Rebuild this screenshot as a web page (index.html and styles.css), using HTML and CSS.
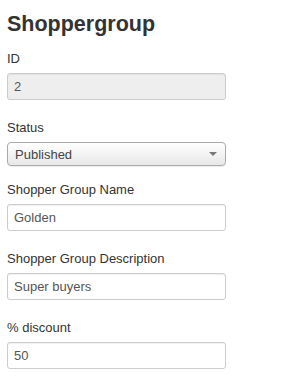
FILE: index.html
```html
<!doctype html>
<html lang="en">

<head>
	<meta charset="utf-8">
	<meta name="viewport" content="width=device-width, initial-scale=1">
	<title>Shoppergroup</title>
	<link rel="stylesheet" href="styles.css">
</head>

<body>

	<main class="page">

		<h2 class="title">Shoppergroup</h2>

		<form class="form">

			<div class="field">
				<label class="label" for="inpId">ID</label>
				<input id="inpId" class="input input-disabled" type="text" value="2" disabled>
			</div>

			<div class="field field-select">
				<label class="label" for="selStatus">Status</label>
				<div class="select-wrap">
					<select id="selStatus" class="select">
						<option selected>Published</option>
						<option>Unpublished</option>
					</select>
				</div>
			</div>

			<div class="field">
				<label class="label" for="inpName">Shopper Group Name</label>
				<input id="inpName" class="input" type="text" value="Golden">
			</div>

			<div class="field">
				<label class="label" for="inpDesc">Shopper Group Description</label>
				<input id="inpDesc" class="input" type="text" value="Super buyers">
			</div>

			<div class="field">
				<label class="label" for="inpDiscount">% discount</label>
				<input id="inpDiscount" class="input" type="text" value="50">
			</div>

		</form>

	</main>

</body>

</html>
```

FILE: styles.css
```css
* {
	box-sizing: border-box;
}

body {
	background-color: #fff;
	color: #333;
	font: 13px/18px "Liberation Sans", Arial, sans-serif;
	margin: 0;
}

.page {
	padding: 0 7px;
}

.title {
	font-size: 21.5px;
	font-weight: bold;
	line-height: 24px;
	margin: 12px 0 14px;
}

.form {
	display: flex;
	flex-direction: column;
	margin: 0;
}

.field {
	display: flex;
	flex-direction: column;
	margin-bottom: 19px;
}

.field-select {
	margin-bottom: 15px;
}

.label {
	display: block;
	margin-bottom: 5px;
}

.input {
	background-color: #fff;
	border: 1px solid #ccc;
	border-radius: 3px;
	box-shadow: inset 0 1px 1px rgba(0, 0, 0, 0.06);
	color: #555;
	font: 13px "Liberation Sans", Arial, sans-serif;
	height: 27px;
	margin: 0;
	padding: 0 6px;
	width: 219px;
}

.input-disabled {
	background-color: #eee;
	color: #555;
	opacity: 1;
}

.select-wrap {
	position: relative;
	width: 219px;
}

.select-wrap::after {
	border-left: 4px solid transparent;
	border-right: 4px solid transparent;
	border-top: 4px solid #777;
	content: "";
	position: absolute;
	right: 9px;
	top: 10px;
}

.select {
	-webkit-appearance: none;
	appearance: none;
	background: linear-gradient(#fff, #e8e8e8);
	border: 1px solid #aaa;
	border-radius: 4px;
	box-shadow: 0 1px 1px rgba(0, 0, 0, 0.08);
	color: #444;
	display: block;
	font: 13px "Liberation Sans", Arial, sans-serif;
	height: 24px;
	margin: 0;
	padding: 0 7px;
	width: 219px;
}
```
